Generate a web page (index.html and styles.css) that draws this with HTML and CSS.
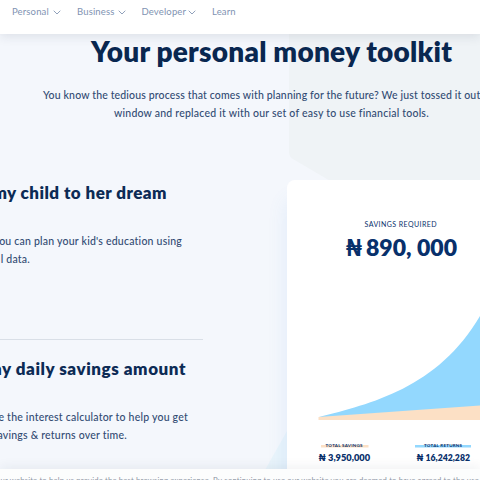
FILE: index.html
```html
<!DOCTYPE html>
<html lang="en">
<head>
<meta charset="utf-8">
<title>Your personal money toolkit</title>
<link rel="stylesheet" href="styles.css">
</head>
<body>
<div class="page">
  <svg class="backdrop" viewBox="0 0 480 480" aria-hidden="true">
    <path fill="#eff3f6" d="M289 0H480V250L400 222L293 159Q289 157 289 152Z"/>
    <path fill="#e9f4fb" d="M265 470L287 431V470Z"/>
  </svg>
  <header class="nav">
    <a class="link personal">Personal</a><svg class="chevron" viewBox="0 0 8 5"><path d="M.7 .7L4 4L7.3 .7"/></svg>
    <a class="link business">Business</a><svg class="chevron" viewBox="0 0 8 5"><path d="M.7 .7L4 4L7.3 .7"/></svg>
    <a class="link developer">Developer</a><svg class="chevron" viewBox="0 0 8 5"><path d="M.7 .7L4 4L7.3 .7"/></svg>
    <a class="link learn">Learn</a>
  </header>
  <section class="intro">
    <h1>Your personal money toolkit</h1>
    <p class="lead first">You know the tedious process that comes with planning for the future? We just tossed it out</p>
    <p class="lead second">window and replaced it with our set of easy to use financial tools.</p>
  </section>
  <main class="content">
    <div class="tools">
      <article class="tool education">
        <h2>my child to her dream</h2>
        <p class="line one">you can plan your kid's education using</p>
        <p class="line two">l data.</p>
      </article>
      <article class="tool savings">
        <h2>my daily savings amount</h2>
        <p class="line one">e the interest calculator to help you get</p>
        <p class="line two">savings &amp; returns over time.</p>
      </article>
    </div>
    <div class="card">
      <svg class="chart" width="193" height="300" viewBox="287 180 193 300">
        <text class="label" x="364.5" y="226.5" textLength="72">SAVINGS REQUIRED</text>
        <text class="amount" x="345.5" y="255.5" textLength="17" lengthAdjust="spacingAndGlyphs">₦</text>
        <text class="amount" x="366" y="255.5" textLength="91" lengthAdjust="spacingAndGlyphs">890, 000</text>
        <path fill="#93d8fe" d="M319 417C370 404 438 388 480 316V420H319Z"/>
        <path fill="#fce0c5" d="M318.5 417L480 405.5V420H318.5Z"/>
        <path fill="#fce0c5" d="M321 445H368.5V447.5H321Z"/>
        <path fill="#93d8fe" d="M415 445H471V447.5H415Z"/>
        <text class="caption" x="325.5" y="447" textLength="37">TOTAL SAVINGS</text>
        <text class="caption" x="424" y="447" textLength="38">TOTAL RETURNS</text>
        <text class="total" x="318.5" y="461" textLength="51.5" lengthAdjust="spacingAndGlyphs">₦ 3,950,000</text>
        <text class="total" x="416.5" y="461" textLength="53.5" lengthAdjust="spacingAndGlyphs">₦ 16,242,282</text>
      </svg>
    </div>
  </main>
  <footer class="notice"><span>our website to help us provide the best browsing experience. By continuing to use our website you are deemed to have agreed to the use</span></footer>
</div>
</body>
</html>
```
FILE: styles.css
```css
* { box-sizing: border-box; }
body { margin: 0; font-family: Lato, "Noto Sans", sans-serif; color: #102d58; }
h1, h2, p { margin: 0; white-space: nowrap; }
.page { position: relative; width: 480px; height: 480px; overflow: hidden; background: #f4f7fc; }
.backdrop { position: absolute; left: 0; top: 0; width: 480px; height: 480px; }
.nav { position: relative; z-index: 2; height: 34px; padding: 4px 0 0 12px; display: flex; align-items: flex-start; background: #fff; box-shadow: 0 2px 12px rgba(30, 45, 65, .12); }
.link { font-size: 9.5px; line-height: 15px; letter-spacing: .15px; color: #7f93b2; white-space: nowrap; }
.personal { width: 41px; }
.business { width: 40.5px; }
.developer { width: 46.5px; }
.chevron { width: 8px; height: 5px; margin-top: 6px; margin-right: 16px; fill: none; stroke: #91a1bb; stroke-width: 1; }
.intro { position: relative; height: 146px; }
h1 { padding-left: 91px; font-size: 28px; line-height: 34px; font-weight: 800; letter-spacing: .23px; color: #092750; }
.lead { font-size: 10.5px; line-height: 18px; letter-spacing: .22px; color: #314b73; font-weight: 500; }
.first { margin-top: 18px; padding-left: 43px; letter-spacing: .15px; }
.second { padding-left: 114px; }
.content { position: relative; display: flex; height: 300px; }
.tools { width: 287px; flex: none; }
.tool { width: 203px; height: 160px; display: flex; flex-direction: column; }
.education { border-bottom: 1px solid #d9dfe7; }
.savings { height: 140px; padding-top: 16px; }
.tool h2, .line { display: flex; justify-content: flex-end; }
h2 { font-size: 17px; line-height: 26px; font-weight: 800; letter-spacing: .45px; color: #0c2b55; }
.line { font-size: 10.5px; line-height: 18px; font-weight: 500; letter-spacing: .22px; color: #314b73; }
.one { margin-top: 26px; }
.education h2 { width: 167px; }
.education .one { width: 182px; }
.education .two { width: 30px; }
.savings h2 { width: 186px; letter-spacing: .55px; }
.savings .one { width: 188px; }
.savings .two { width: 127px; }
.card { width: 193px; height: 300px; border-radius: 8px 0 0 0; background: #fff; box-shadow: 0 20px 20px rgba(80, 145, 230, .12); }
.chart { display: block; }
.chart text { fill: #08306b; font-family: Lato, "Noto Sans", sans-serif; }
.label { font-size: 7px; }
.amount { font-size: 22px; font-weight: 800; }
.caption { font-size: 4.5px; font-weight: 700; }
.total { font-size: 9.5px; font-weight: 800; }
.notice { position: absolute; z-index: 3; left: 0; top: 469px; width: 480px; height: 11px; padding-top: 5px; overflow: hidden; background: #fcfdfd; box-shadow: 0 -2px 12px rgba(30, 45, 65, .07); }
.notice span { display: block; margin-left: -4px; font-size: 7.7px; line-height: 12px; letter-spacing: .17px; color: #8c94a3; white-space: nowrap; }
```
